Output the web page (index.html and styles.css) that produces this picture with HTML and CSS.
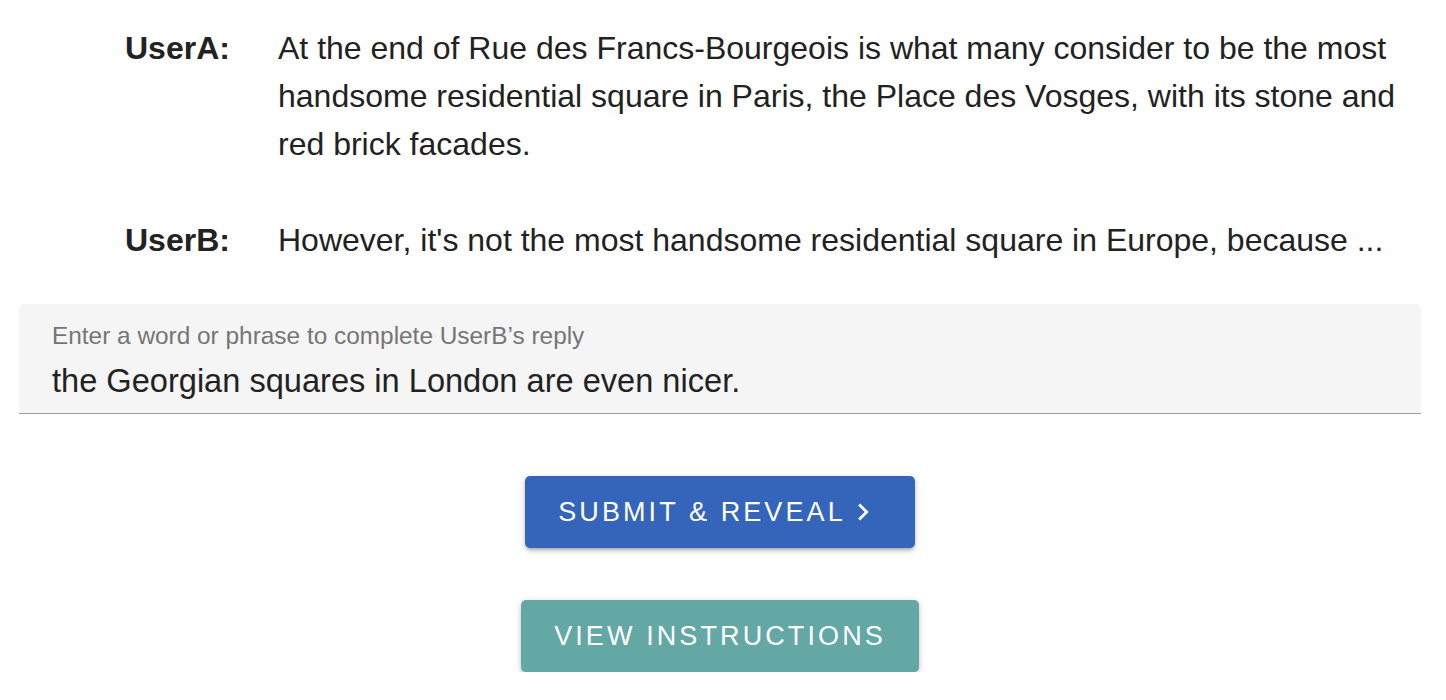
FILE: index.html
```html
<!DOCTYPE html>
<html>
<head>
<meta charset="utf-8">
<link rel="stylesheet" href="styles.css">
</head>
<body>
<main class="page">
  <section class="dialog">
    <div class="turn">
      <div class="speaker">UserA:</div>
      <div class="utterance">At the end of Rue des Francs-Bourgeois is what many consider to be the most handsome residential square in Paris, the Place des Vosges, with its stone and red brick facades.</div>
    </div>
    <div class="turn">
      <div class="speaker">UserB:</div>
      <div class="utterance">However, it's not the most handsome residential square in Europe, because ...</div>
    </div>
  </section>
  <div class="field">
    <div class="field-label">Enter a word or phrase to complete UserB’s reply</div>
    <div class="field-value">the Georgian squares in London are even nicer.</div>
  </div>
  <div class="actions">
    <button class="btn btn-primary">SUBMIT &amp; REVEAL<svg class="chev" viewBox="0 0 24 24"><path d="M8.6 16.6 13.2 12 8.6 7.4 10 6l6 6-6 6z" fill="#fff"/></svg></button>
    <button class="btn btn-secondary">VIEW INSTRUCTIONS</button>
  </div>
</main>
</body>
</html>
```

FILE: styles.css
```css
* { box-sizing: border-box; }
html, body { margin: 0; padding: 0; background: #fff; }
body {
  font-family: "Liberation Sans", Arial, Helvetica, sans-serif;
  color: #222;
}
.page {
  width: 1446px;
  padding: 24px 25px 0 19px;
}
.dialog {
  padding-left: 106px;
  display: flex;
  flex-direction: column;
  gap: 48px;
}
.turn {
  display: flex;
  font-size: 32px;
  line-height: 48px;
}
.speaker {
  width: 153px;
  flex: none;
  font-weight: bold;
}
.utterance {
  flex: 1;
  padding-right: 10px;
}
.field {
  margin-top: 40px;
  background: #f5f5f5;
  border-radius: 6px 6px 0 0;
  border-bottom: 1px solid #9e9e9e;
  padding: 18px 33px 0 33px;
  height: 110px;
}
.field-label {
  font-size: 24.4px;
  line-height: 28px;
  color: #757575;
}
.field-value {
  font-size: 32.6px;
  line-height: 40px;
  margin-top: 11px;
  color: #222;
}
.actions {
  display: flex;
  flex-direction: column;
  align-items: center;
  gap: 52px;
  margin-top: 62px;
}
.btn {
  border: none;
  height: 72px;
  border-radius: 5px;
  color: #fff;
  font-family: "Liberation Sans", Arial, sans-serif;
  font-size: 27px;
  letter-spacing: 3.1px;
  display: flex;
  align-items: center;
  justify-content: center;
  box-shadow: 0 3px 3px -2px rgba(0,0,0,.22), 0 3px 4px 0 rgba(0,0,0,.14), 0 1px 8px 0 rgba(0,0,0,.12);
}
.btn-primary {
  width: 390px;
  background: #3465ba;
  padding-left: 4px;
}
.btn-secondary {
  width: 398px;
  background: #63a8a4;
}
.chev {
  width: 34px;
  height: 34px;
  margin-left: 0;
  flex: none;
}
```
